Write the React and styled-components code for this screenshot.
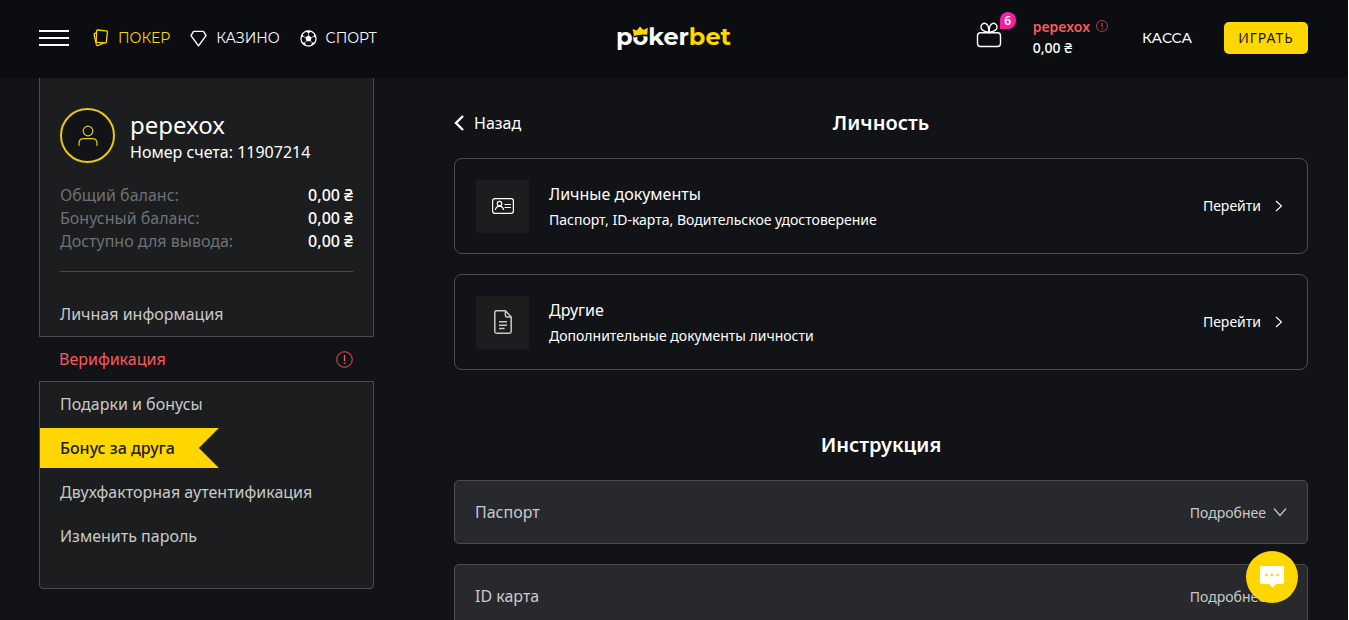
import React from 'react'
import styled, { createGlobalStyle } from 'styled-components'

const GlobalStyle = createGlobalStyle`
  * {
    box-sizing: border-box;
    margin: 0;
    padding: 0;
  }
  html, body, #root {
    height: 100%;
  }
  body {
    background: #111317;
    color: #fff;
    font-family: 'Noto Sans', 'Open Sans', sans-serif;
    font-size: 16px;
    overflow: hidden;
  }
  a {
    color: inherit;
    text-decoration: none;
  }
  button {
    background: transparent;
    border: none;
    color: inherit;
    cursor: pointer;
    font-family: inherit;
    font-size: inherit;
  }
  svg {
    display: block;
    flex-shrink: 0;
  }
`

const CardsIcon = () => (
  <svg width='16' height='18' viewBox='0 0 16 18' fill='none' stroke='currentColor' strokeWidth='1.3' strokeLinejoin='round'>
    <path d='M4.8 1 L13.2 1.8 Q14.6 2 14.4 3.2 L13.4 12.8 Q13.2 14.2 12 14 L4.4 13.4 Q3.1 13.2 3.2 11.9 L3.6 2 Q3.7 0.9 4.8 1Z' />
    <path d='M3.4 3.8 L1.9 4.3 Q0.8 4.7 1.1 5.8 L3.3 15.4 Q3.7 16.9 5.1 16.5 L10.4 14.2' />
  </svg>
)

const DiamondIcon = () => (
  <svg width='17' height='17' viewBox='0 0 17 17' fill='none' stroke='currentColor' strokeWidth='1.4' strokeLinejoin='round'>
    <path d='M4 1.4 H13 Q13.5 1.4 13.8 1.9 L16 5.6 L8.5 15.8 L1 5.6 L3.2 1.9 Q3.5 1.4 4 1.4Z' />
  </svg>
)

const BallIcon = () => (
  <svg width='17' height='17' viewBox='0 0 17 17' fill='none' stroke='currentColor'>
    <circle cx='8.5' cy='8.5' r='7.6' strokeWidth='1.2' />
    <g fill='currentColor' stroke='none'>
      <path d='M8.5 5.2 L11.7 7.5 L10.5 11.2 H6.5 L5.3 7.5Z' />
      <path d='M5.2 1.3 L8.5 3.2 L11.8 1.3 Q8.5 0.2 5.2 1.3Z' />
      <path d='M0.9 8.2 L3.2 6.4 L2.7 3.1 Q0.9 5 0.9 8.2Z' />
      <path d='M16.1 8.2 L13.8 6.4 L14.3 3.1 Q16.1 5 16.1 8.2Z' />
      <path d='M1.9 12.4 L4.9 12.6 L6 15.7 Q3.4 14.8 1.9 12.4Z' />
      <path d='M15.1 12.4 L12.1 12.6 L11 15.7 Q13.6 14.8 15.1 12.4Z' />
    </g>
    <path strokeWidth='0.7' d='M8.5 5.2V3 M11.7 7.5L14 6.2 M10.5 11.2L12.2 12.6 M6.5 11.2L4.8 12.6 M5.3 7.5L3 6.2' />
  </svg>
)

const CrownIcon = () => (
  <svg width='17' height='12' viewBox='0 0 17 12'>
    <path fill='#0c0d11' d='M0.5 6.5H16.5L15.6 10.4Q8.5 9.6 2 11.6Z' />
    <path fill='#ffd600' d='M2 10 L0.6 3 L4.8 4.4 L8 0.4 L11.4 4 L15.8 1.8 L15.2 8.8 Q8.5 7.8 2 10Z' />
  </svg>
)

const GiftIcon = () => (
  <svg width='26' height='26' viewBox='0 0 26 26' fill='none' stroke='currentColor' strokeWidth='1.4'>
    <rect x='1.5' y='10.7' width='23' height='13.8' rx='3' />
    <path d='M13 10.5 C10 9.8 5 9.2 5 5.2 C5 2.2 7.4 1 9.2 1.4 C12 2.2 13 6 13 10.5Z' />
    <path d='M13 10.5 C16 9.8 21 9.2 21 5.2 C21 2.2 18.6 1 16.8 1.4 C14 2.2 13 6 13 10.5Z' />
  </svg>
)

const WarningIcon = ({ size }) => (
  <svg width={size} height={size} viewBox='0 0 16 16' fill='none' stroke='#f9595e' strokeWidth='0.9'>
    <circle cx='8' cy='8' r='7.3' />
    <path d='M8 3.8V9.4M8 10.8V12.2' strokeWidth='1.2' />
  </svg>
)

const UserIcon = () => (
  <svg width='20' height='22' viewBox='0 0 20 22' fill='none' stroke='currentColor' strokeWidth='1.2' strokeLinecap='round'>
    <circle cx='10' cy='6' r='4.8' />
    <path d='M1 20.5V18.2Q1 13.6 5.6 13.6H14.4Q19 13.6 19 18.2V20.5' />
  </svg>
)

const IdCardIcon = () => (
  <svg width='22' height='16' viewBox='0 0 22 16' fill='none' stroke='currentColor' strokeWidth='1.2'>
    <rect x='0.6' y='0.6' width='20.8' height='14.8' rx='2.4' />
    <circle cx='7.5' cy='5.6' r='2.3' />
    <path d='M3.4 12Q4 8.4 7.5 8.2Q11 8.4 11.6 12M12.5 6.5H19M12.5 9.5H19' />
  </svg>
)

const FileIcon = () => (
  <svg width='18' height='24' viewBox='0 0 18 24' fill='none' stroke='#c8c8ca' strokeWidth='1.5' strokeLinejoin='round'>
    <path d='M2.4 0.8H11.4L17.2 7V21.6Q17.2 23.2 15.6 23.2H2.4Q0.8 23.2 0.8 21.6V2.4Q0.8 0.8 2.4 0.8Z' />
    <path d='M11.4 0.8V5.4Q11.4 7 13 7H17.2M5 11.8H13M5 15.2H13M5 18.6H10.6' />
  </svg>
)

const ArrowIcon = ({ d, width, height, weight }) => (
  <svg width={width} height={height} viewBox={`0 0 ${width} ${height}`} fill='none' stroke='currentColor' strokeWidth={weight}>
    <path d={d} />
  </svg>
)

const ChatIcon = () => (
  <svg width='24' height='22' viewBox='0 0 24 22' fill='#fff'>
    <path d='M1.5 0H22.5Q24 0 24 1.5V16.4Q24 18 22.5 18H16L12.6 21.4L9.2 18H1.5Q0 18 0 16.4V1.5Q0 0 1.5 0Z' />
    <g fill='#ffd600'>
      <circle cx='6.4' cy='9' r='1.4' />
      <circle cx='12' cy='9' r='1.4' />
      <circle cx='17.6' cy='9' r='1.4' />
    </g>
  </svg>
)

const games = [
  { title: 'ПОКЕР', icon: <CardsIcon />, active: true },
  { title: 'КАЗИНО', icon: <DiamondIcon /> },
  { title: 'СПОРТ', icon: <BallIcon /> },
]

const balances = [
  { label: 'Общий баланс:', value: '0,00 ₴' },
  { label: 'Бонусный баланс:', value: '0,00 ₴' },
  { label: 'Доступно для вывода:', value: '0,00 ₴' },
]

const documents = [
  { title: 'Личные документы', text: 'Паспорт, ID-карта, Водительское удостоверение', icon: <IdCardIcon /> },
  { title: 'Другие', text: 'Дополнительные документы личности', icon: <FileIcon /> },
]

const instructions = ['Паспорт', 'ID карта']

const Header = () => (
  <HeaderBar>
    <HeaderSide>
      <MenuButton aria-label='Меню'>
        <span />
        <span />
        <span />
      </MenuButton>
      <GamesNav>
        {games.map(({ title, icon, active }) => (
          <GameLink href='#' key={title} $active={active}>
            {icon}
            {title}
          </GameLink>
        ))}
      </GamesNav>
    </HeaderSide>
    <Logo href='#'>
      p<LogoO>o<CrownIcon /></LogoO>ker<b>bet</b>
    </Logo>
    <HeaderSide $end>
      <GiftButton aria-label='Подарки'>
        <GiftIcon />
        <Badge>6</Badge>
      </GiftButton>
      <Account href='#'>
        <AccountName>
          pepexox
          <WarningIcon size={12} />
        </AccountName>
        <span>0,00 ₴</span>
      </Account>
      <CashLink href='#'>КАССА</CashLink>
      <PlayButton>ИГРАТЬ</PlayButton>
    </HeaderSide>
  </HeaderBar>
)

const Sidebar = () => (
  <SidebarWrapper>
    <Panel $top>
      <Profile>
        <Avatar>
          <UserIcon />
        </Avatar>
        <div>
          <UserName>pepexox</UserName>
          <AccountNumber>Номер счета: 11907214</AccountNumber>
        </div>
      </Profile>
      <Balances>
        {balances.map(({ label, value }) => (
          <BalanceRow key={label}>
            <dt>{label}</dt>
            <dd>{value}</dd>
          </BalanceRow>
        ))}
      </Balances>
      <SideLink href='#'>Личная информация</SideLink>
    </Panel>
    <VerifyLink href='#'>
      Верификация
      <WarningIcon size={17} />
    </VerifyLink>
    <Panel>
      <SideLink href='#'>Подарки и бонусы</SideLink>
      <RibbonLink href='#'>Бонус за друга</RibbonLink>
      <SideLink href='#'>Двухфакторная аутентификация</SideLink>
      <SideLink href='#'>Изменить пароль</SideLink>
    </Panel>
  </SidebarWrapper>
)

const App = () => {
  return (
    <Page>
      <GlobalStyle />
      <Header />
      <Content>
        <Sidebar />
        <Main>
          <TitleRow>
            <BackButton>
              <ArrowIcon width={10} height={16} weight={2.4} d='M9 1L2 8L9 15' />
              Назад
            </BackButton>
            <Title>Личность</Title>
          </TitleRow>
          <List>
            {documents.map(({ title, text, icon }) => (
              <DocumentCard href='#' key={title}>
                <IconBox>{icon}</IconBox>
                <DocumentInfo>
                  <h3>{title}</h3>
                  <p>{text}</p>
                </DocumentInfo>
                <GoLabel>
                  Перейти
                  <ArrowIcon width={8} height={12} weight={1.1} d='M1 1L6.5 6L1 11' />
                </GoLabel>
              </DocumentCard>
            ))}
          </List>
          <SectionTitle>Инструкция</SectionTitle>
          <List>
            {instructions.map((name) => (
              <Instruction key={name} aria-expanded='false'>
                {name}
                <MoreLabel>
                  Подробнее
                  <ArrowIcon width={14} height={10} weight={1.2} d='M1 1.5L7 8.5L13 1.5' />
                </MoreLabel>
              </Instruction>
            ))}
          </List>
        </Main>
      </Content>
      <ChatButton aria-label='Чат'>
        <ChatIcon />
      </ChatButton>
    </Page>
  )
}

const Page = styled.div`
  height: 100%;
  overflow: hidden;
  border-right: 1px solid #fff;
`

const HeaderBar = styled.header`
  display: grid;
  grid-template-columns: 1fr auto 1fr;
  align-items: center;
  height: 78px;
  padding: 0 40px 2px 39px;
  background: #0c0d11;
`

const HeaderSide = styled.div`
  display: flex;
  align-items: center;
  justify-content: ${({ $end }) => ($end ? 'flex-end' : 'flex-start')};
`

const MenuButton = styled.button`
  display: flex;
  flex-direction: column;
  gap: 5px;
  width: 30px;
  margin-right: 24px;

  span {
    height: 2px;
    background: #fff;
  }
`

const GamesNav = styled.nav`
  display: flex;
  gap: 20px;
`

const GameLink = styled.a`
  display: flex;
  align-items: center;
  gap: 9px;
  font-family: Montserrat, 'Noto Sans', sans-serif;
  font-size: 14px;
  color: ${({ $active }) => ($active ? '#ffd600' : '#fff')};
`

const Logo = styled.a`
  padding-bottom: 2px;
  font-family: Montserrat, 'Open Sans', sans-serif;
  font-size: 24px;
  font-weight: 700;
  line-height: 32px;

  b {
    color: #ffd600;
    font-weight: 700;
  }
`

/* the crown sits on top of the letter */
const LogoO = styled.span`
  position: relative;

  svg {
    position: absolute;
    left: -1px;
    top: 4px;
  }
`

const GiftButton = styled.button`
  position: relative;
  margin-right: 31px;
  padding-bottom: 6px;
`

const Badge = styled.span`
  position: absolute;
  top: -10px;
  right: -14px;
  width: 16px;
  height: 17px;
  border-radius: 8px 8px 8px 0;
  background: #f81ca0;
  font-size: 12px;
  font-weight: 600;
  line-height: 17px;
  text-align: center;
`

const Account = styled.a`
  margin-right: 34px;
  padding-bottom: 2px;
  font-size: 14px;
  font-weight: 500;
  line-height: 21px;
`

const AccountName = styled.div`
  display: flex;
  align-items: center;
  gap: 6px;
  color: #f9595e;
  font-weight: 600;

  svg {
    margin-bottom: 2px;
  }
`

const CashLink = styled.a`
  margin-right: 32px;
  font-family: Montserrat, 'Noto Sans', sans-serif;
  font-size: 14px;
  font-weight: 500;
`

const PlayButton = styled.button`
  width: 84px;
  height: 32px;
  padding-bottom: 2px;
  border-radius: 5px;
  background: #ffd600;
  color: #15161a;
  font-size: 14px;
  letter-spacing: 1px;
`

const Content = styled.div`
  display: flex;
  gap: 80px;
  align-items: flex-start;
  padding: 0 40px 0 39px;
`

const SidebarWrapper = styled.aside`
  flex: 0 0 335px;
`

const Panel = styled.section`
  display: flex;
  flex-direction: column;
  align-items: flex-start;
  gap: 4px;
  padding: ${({ $top }) => ($top ? '30px 20px 2px' : '2px 20px 32px')};
  border: 1px solid #4b4c50;
  border-top-width: ${({ $top }) => ($top ? '0' : '1px')};
  border-radius: ${({ $top }) => ($top ? '0' : '0 0 4px 4px')};
  background: #1b1d1e;
`

const Profile = styled.div`
  display: flex;
  gap: 15px;
`

const Avatar = styled.div`
  display: flex;
  align-items: center;
  justify-content: center;
  width: 55px;
  height: 55px;
  border: 2px solid #e8c61a;
  border-radius: 50%;
  background: #111317;
  color: #e8c61a;
`

const UserName = styled.h1`
  font-size: 24px;
  font-weight: 400;
  line-height: 34px;
`

const AccountNumber = styled.p`
  line-height: 21px;
`

const Balances = styled.dl`
  width: 100%;
  margin: 17px 0 18px;
  padding-bottom: 18px;
  border-bottom: 1px solid #4b4c50;
`

const BalanceRow = styled.div`
  display: flex;
  justify-content: space-between;
  line-height: 23px;

  dt {
    color: #6f7176;
  }
  dd {
    font-weight: 500;
  }
`

const SideLink = styled.a`
  color: #c9c9cb;
  line-height: 40px;
`

const RibbonLink = styled(SideLink)`
  margin-left: -20px;
  padding: 0 44px 0 20px;
  background: #ffd600;
  color: #1b1d1e;
  font-weight: 500;
  clip-path: polygon(0 0, 100% 0, calc(100% - 20px) 50%, 100% 100%, 0 100%);
`

const VerifyLink = styled.a`
  display: flex;
  align-items: center;
  justify-content: space-between;
  padding: 0 21px 0 20px;
  color: #f9595e;
  line-height: 44px;
`

const Main = styled.main`
  flex: 1;
`

const TitleRow = styled.div`
  display: grid;
  grid-template-columns: 1fr auto 1fr;
  align-items: center;
  padding: 30px 0 20px;
`

const BackButton = styled.button`
  display: flex;
  align-items: center;
  justify-self: start;
  gap: 10px;
`

const Title = styled.h2`
  font-size: 20px;
  font-weight: 600;
  line-height: 30px;
`

const SectionTitle = styled(Title)`
  padding: 60px 0 20px;
  text-align: center;
`

const List = styled.div`
  display: grid;
  gap: 20px;
`

const DocumentCard = styled.a`
  display: flex;
  align-items: center;
  gap: 20px;
  height: 96px;
  padding: 0 24px 0 21px;
  border: 1px solid #4b4c50;
  border-radius: 8px;
`

const IconBox = styled.div`
  display: flex;
  align-items: center;
  justify-content: center;
  width: 53px;
  height: 53px;
  background: #1b1d1e;
`

const DocumentInfo = styled.div`
  flex: 1;
  padding-top: 2px;

  h3 {
    font-size: 16px;
    font-weight: 400;
    line-height: 26px;
  }
  p {
    font-size: 14px;
    line-height: 26px;
  }
`

const GoLabel = styled.span`
  display: flex;
  align-items: center;
  gap: 14px;
  padding-bottom: 1px;
  font-size: 14px;
`

const Instruction = styled.button`
  display: flex;
  align-items: center;
  justify-content: space-between;
  height: 64px;
  padding: 0 20px;
  border: 1px solid #4b4c50;
  border-radius: 5px;
  background: #28292d;
  color: #c9c9cb;
`

const MoreLabel = styled.span`
  display: flex;
  align-items: center;
  gap: 7px;
  font-size: 14px;
`

const ChatButton = styled.button`
  position: fixed;
  right: 51px;
  bottom: 17px;
  display: flex;
  align-items: center;
  justify-content: center;
  width: 52px;
  height: 52px;
  border-radius: 50%;
  background: #ffd600;
`

export default App
